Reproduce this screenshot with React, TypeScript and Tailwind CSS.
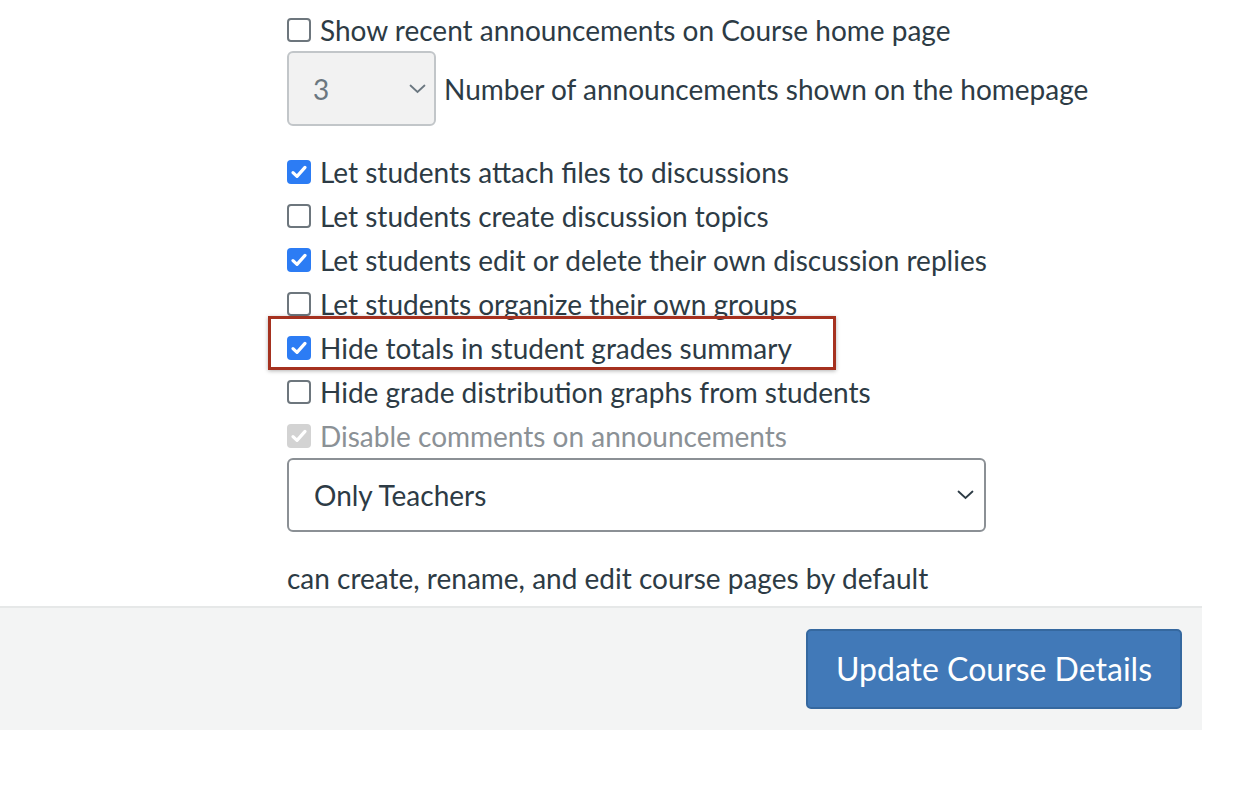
import type { ReactNode } from "react";

type Option = { label: string; checked: boolean; disabled?: boolean; highlight?: boolean };

const options: Option[] = [
  { label: "Let students attach files to discussions", checked: true },
  { label: "Let students create discussion topics", checked: false },
  { label: "Let students edit or delete their own discussion replies", checked: true },
  { label: "Let students organize their own groups", checked: false },
  { label: "Hide totals in student grades summary", checked: true, highlight: true },
  { label: "Hide grade distribution graphs from students", checked: false },
  { label: "Disable comments on announcements", checked: true, disabled: true },
];

function Check() {
  return (
    <svg className="h-[18px] w-[18px]" fill="none" viewBox="0 0 18 18">
      <path
        d="M3 9.6 7 13.4 15 4.4"
        stroke="white"
        strokeLinecap="round"
        strokeLinejoin="round"
        strokeWidth="3.2"
      />
    </svg>
  );
}

function Box({ checked, disabled }: { checked: boolean; disabled?: boolean }) {
  if (disabled) {
    return (
      <span className="flex h-[24px] w-[24px] shrink-0 items-center justify-center rounded-[4px] bg-[#d3d3d3]">
        <Check />
      </span>
    );
  }
  if (checked) {
    return (
      <span className="flex h-[24px] w-[24px] shrink-0 items-center justify-center rounded-[4px] bg-[#2c7cf4]">
        <Check />
      </span>
    );
  }
  return (
    <span className="h-[24px] w-[24px] shrink-0 rounded-[4px] border-2 border-[#6d767d] bg-white" />
  );
}

function Chevron({ color }: { color: string }) {
  return (
    <svg className="h-[10px] w-[17px]" fill="none" viewBox="0 0 17 10">
      <path d="M1.5 1.5 8.5 8 15.5 1.5" stroke={color} strokeLinecap="round" strokeWidth="1.8" />
    </svg>
  );
}

function Row({ children }: { children: ReactNode }) {
  return <div className="flex h-[44px] items-center">{children}</div>;
}

export default function App() {
  return (
    <div className="h-[790px] w-[1260px] overflow-hidden bg-white font-['Lato','Noto_Sans',sans-serif] text-[28px] text-[#2d3b45]">
      <div className="w-[1202px]">
        <div className="pt-[8px] pl-[287px]">
          <Row>
            <Box checked={false} />
            <span className="ml-[9px]">Show recent announcements on Course home page</span>
          </Row>
          <div className="-mt-[1px] flex items-center">
            <div className="flex h-[75px] w-[149px] items-center justify-between rounded-[6px] border-2 border-[#c2c6c9] bg-[#f2f2f2] pr-[8px] pl-[24px] text-[#6b7780]">
              <span>3</span>
              <Chevron color="#6b7780" />
            </div>
            <span className="ml-[8px]">Number of announcements shown on the homepage</span>
          </div>
          <div className="pt-[24px]">
            {options.map((opt) => (
              <Row key={opt.label}>
                <div className="relative flex items-center">
                  {opt.highlight ? (
                    <div className="absolute top-[-11px] left-[-19px] h-[54px] w-[568px] border-[3px] border-[#a5311f] shadow-[0_1px_4px_rgba(0,0,0,0.3)]" />
                  ) : null}
                  <Box checked={opt.checked} disabled={opt.disabled} />
                  <span className={opt.disabled ? "ml-[9px] text-[#8b9196]" : "ml-[9px]"}>
                    {opt.label}
                  </span>
                </div>
              </Row>
            ))}
          </div>
          <div className="flex h-[74px] w-[699px] items-center justify-between rounded-[6px] border-2 border-[#8b9095] bg-white pr-[10px] pl-[25px]">
            <span>Only Teachers</span>
            <Chevron color="#2d3b45" />
          </div>
          <div className="flex h-[74px] items-center pt-[18px]">
            can create, rename, and edit course pages by default
          </div>
        </div>
        <footer className="flex h-[124px] items-center justify-end border-t-2 border-[#e6e8e8] bg-[#f3f4f4] pr-[20px]">
          <button
            className="h-[80px] w-[376px] rounded-[5px] border-2 border-[#35689f] bg-[#4179b8] text-[32px] text-white"
            type="button"
          >
            Update Course Details
          </button>
        </footer>
      </div>
    </div>
  );
}
